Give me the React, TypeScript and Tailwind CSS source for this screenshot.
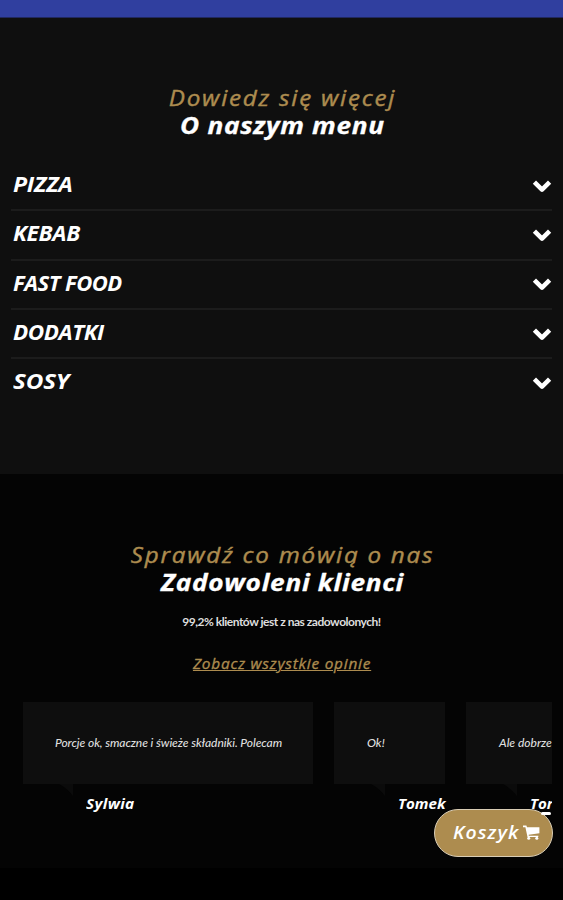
const display = "font-['Open_Sans',sans-serif] italic";

const categories = [
  { name: "PIZZA", style: "scale-x-[1.1] tracking-[-0.2px]" },
  { name: "KEBAB", style: "scale-x-[1.08] tracking-[-0.3px]" },
  { name: "FAST FOOD", style: "scale-x-[1.05] tracking-[-0.5px]" },
  { name: "DODATKI", style: "scale-x-[1.07] tracking-[-0.4px]" },
  { name: "SOSY", style: "scale-x-[1.15] tracking-[-0.1px]" },
];

function Chevron() {
  return (
    <svg viewBox="0 0 20 13" className="mt-[4px] h-[13px] w-[20px]" fill="none" stroke="#fff" strokeWidth="4.6" strokeLinejoin="round">
      <path d="M2.4 2.2 10 9.6 17.6 2.2" />
    </svg>
  );
}

function Tail({ className }: { className: string }) {
  return (
    <svg viewBox="0 0 14 12" className={`h-3 w-3.5 shrink-0 ${className}`} fill="#0b0b0b">
      <path d="M0 0h14v12Q9 5 0 0Z" />
    </svg>
  );
}

function Cart() {
  return (
    <svg viewBox="0 0 17 15" className="h-[15px] w-[17px]" fill="#fff">
      <path d="M0 .6h3.4l.6 1.6h12.4v6L5.7 9.7l.1 1h9.5v1.4H4.5L2.4 2.2H0Z" />
      <circle cx="5.7" cy="13.2" r="1.5" />
      <circle cx="13.8" cy="13.2" r="1.5" />
    </svg>
  );
}

export default function App() {
  return (
    <div className="relative flex h-[900px] w-full flex-col overflow-hidden bg-black text-white">
      <div className="h-[18px] shrink-0 border-b border-[#20285e] bg-[#303f9f]" />

      <section className="h-[456px] shrink-0 bg-[#0f0f0f] px-[11px] pt-[65px]">
        <h2 className={`${display} pl-[2px] text-center`}>
          <span className="block h-7 scale-x-[1.1] text-[22px] leading-7 font-medium tracking-[1.6px] text-[#ad8c4f] [-webkit-text-stroke:0.4px_#ad8c4f]">
            Dowiedz się więcej
          </span>
          <span className="block h-7 scale-x-[1.14] text-[23px] leading-7 font-bold tracking-[0.6px] [-webkit-text-stroke:0.3px_#fff]">O naszym menu</span>
        </h2>
        <ul className="mt-[23px]">
          {categories.map((c) => (
            <li
              key={c.name}
              className="flex h-[49.3px] items-center justify-between border-b-2 border-[#1c1c1c] pb-[3px] pl-0.5 last:border-transparent"
            >
              <span className={`${display} origin-left text-[21px] leading-7 font-bold ${c.style}`}>{c.name}</span>
              <Chevron />
            </li>
          ))}
        </ul>
      </section>

      <section className="h-[394px] shrink-0 bg-[#040404] pt-[66px]">
        <h2 className={`${display} pl-[2px] text-center`}>
          <span className="block h-7 scale-x-[1.1] text-[22px] leading-7 font-medium tracking-[1.6px] text-[#ad8c4f] [-webkit-text-stroke:0.4px_#ad8c4f]">
            Sprawdź co mówią o nas
          </span>
          <span className="block h-7 scale-x-[1.14] text-[23px] leading-7 font-bold tracking-[0.6px] [-webkit-text-stroke:0.3px_#fff]">Zadowoleni klienci</span>
        </h2>
        <p className="mt-[17px] text-center font-['Lato',sans-serif] text-[12px] leading-[18px] font-bold tracking-[-0.48px] text-[#dedede]">
          99,2% klientów jest z nas zadowolonych!
        </p>
        <p className="mt-[22px] scale-x-[1.1] pl-px text-center leading-5">
          <a className={`${display} text-[14px] font-medium tracking-[0.7px] text-[#ad8c4f] underline [-webkit-text-stroke:0.3px_#ad8c4f]`}>
            Zobacz wszystkie opinie
          </a>
        </p>

        <div className="mt-[28px] mr-[11px] ml-[23px] flex gap-[21px] overflow-hidden font-['Lato',sans-serif] text-[12px] text-[#dedede] italic">
          <div className="w-[290px] shrink-0">
            <div className="h-[82px] bg-[#0e0e0e] pt-[32px] pl-[32px] leading-[18px] font-medium whitespace-nowrap tracking-[-0.07px]">
              Porcje ok, smaczne i świeże składniki. Polecam
            </div>
            <div className="flex">
              <Tail className="ml-[36px]" />
              <b className={`${display} mt-[10px] ml-[13px] origin-left scale-x-[1.1] text-[14px] leading-5 tracking-[0.3px] text-white`}>Sylwia</b>
            </div>
          </div>
          <div className="w-[111px] shrink-0">
            <div className="h-[82px] bg-[#0e0e0e] pt-[32px] pl-[33px] leading-[18px] font-medium">Ok!</div>
            <div className="flex">
              <Tail className="ml-[37px]" />
              <b className={`${display} mt-[10px] ml-[13px] origin-left scale-x-[1.08] text-[14px] leading-5 text-white`}>Tomek</b>
            </div>
          </div>
          <div className="w-[111px] shrink-0">
            <div className="h-[82px] bg-[#0e0e0e] pt-[32px] pl-[33px] leading-[18px] font-medium whitespace-nowrap">Ale dobrze</div>
            <div className="flex">
              <Tail className="ml-[37px]" />
              <b className={`${display} mt-[10px] ml-[13px] origin-left scale-x-[1.08] text-[14px] leading-5 text-white`}>Tor</b>
            </div>
          </div>
        </div>
      </section>

      <button
        className={`${display} absolute top-[809px] left-[434px] flex h-[48px] w-[119px] items-center rounded-full border border-[#d9cdb5] bg-[#ad8c4f] pb-px pl-[18px] text-[18px] font-semibold`}
      >
        <span className="w-[70px] origin-left scale-x-[1.08] text-left tracking-[1px]">Koszyk</span>
        <Cart />
      </button>
      <span className="absolute top-[812px] left-[541px] h-[3px] w-[10px] rounded-sm bg-white" />
    </div>
  );
}
